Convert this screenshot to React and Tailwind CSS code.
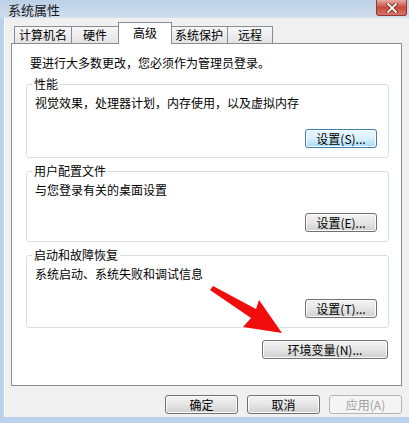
import React from "react";

const font = { fontFamily: '"Noto Sans CJK SC", "Noto Sans", sans-serif' };

function Btn({ children, className = "", disabled = false, focus = false }) {
  const base = "h-[19px] flex items-center justify-center rounded-[3px] text-[12px] leading-none border";
  let look;
  if (disabled) {
    look = "border-[#b5b5b5] bg-[#f4f4f4] text-[#a0a0a0]";
  } else if (focus) {
    look = "border-[#3c7fb1] bg-gradient-to-b from-[#eaf6fd] via-[#d9f0fc] to-[#a7d9f5] text-black shadow-[inset_0_0_0_1px_#ffffff]";
  } else {
    look = "border-[#707070] bg-gradient-to-b from-[#f2f2f2] via-[#e6e6e6] to-[#cfcfcf] text-black shadow-[inset_0_0_0_1px_#fbfbfb]";
  }
  return <div className={`${base} ${look} ${className}`}>{children}</div>;
}

function Group({ label, text, btn, h, focus }) {
  return (
    <div className={`relative ${h} w-[363px] border border-[#d5dfe5] rounded-[3px] flex flex-col`}>
      <span className="absolute left-[5px] top-[-9px] bg-white px-[2px] text-[12px] leading-[16px] text-black">
        {label}
      </span>
      <div className="pl-[8px] pt-[10px] text-[12px] leading-[16px] text-black">{text}</div>
      <div className="mt-auto mb-[9px] mr-[11px] self-end">
        <Btn className="w-[72px]" focus={focus}>{btn}</Btn>
      </div>
    </div>
  );
}

function Tab({ children, w, selected }) {
  if (selected) {
    return (
      <div
        className={`${w} h-[22px] -mb-[1px] -mx-[1px] relative z-10 bg-white border border-b-0 border-[#898c95] flex items-start justify-center pt-[2px] text-[12px] leading-[16px] text-black`}
      >
        {children}
      </div>
    );
  }
  return (
    <div
      className={`${w} h-[17px] bg-gradient-to-b from-[#f7f7f7] to-[#e3e3e3] border border-b-0 border-[#898c95] flex items-center justify-center text-[12px] leading-[16px] text-black -ml-[1px]`}
    >
      {children}
    </div>
  );
}

export default function App() {
  return (
    <div className="relative w-[409px] h-[423px] overflow-hidden bg-[#b9d1ea] flex flex-col" style={font}>
      {/* title bar */}
      <div className="h-[18px] flex items-start justify-between bg-gradient-to-b from-[#bcd0e6] to-[#d2dfee] pl-[8px] pr-[2px]">
        <span className="text-[13px] leading-[17px] text-[#1a1a1a] mt-[1px]">系统属性</span>
        <div className="w-[31px] h-[16px] rounded-b-[3px] border border-t-0 border-[#8a3b3b] bg-gradient-to-b from-[#e7a9a0] via-[#c8493c] to-[#d9746a] flex items-center justify-center">
          <svg width="12" height="10" viewBox="0 0 12 10">
            <path d="M2 1 L10 9 M10 1 L2 9" stroke="#5a1a1a" strokeWidth="3.2" strokeLinecap="square" />
            <path d="M2 1 L10 9 M10 1 L2 9" stroke="#ffffff" strokeWidth="1.8" strokeLinecap="square" />
          </svg>
        </div>
      </div>

      {/* body */}
      <div className="flex-1 ml-[4px] mb-[6px] border-l border-white bg-[#f0f0f0] flex flex-col pl-[6px] pr-[6px]">
        {/* tabs */}
        <div className="h-[25px] flex items-end pl-[4px]">
          <Tab w="w-[58px]">计算机名</Tab>
          <Tab w="w-[48px]">硬件</Tab>
          <Tab w="w-[54px]" selected>高级</Tab>
          <Tab w="w-[58px]">系统保护</Tab>
          <Tab w="w-[46px]">远程</Tab>
        </div>

        {/* panel */}
        <div className="w-[391px] h-[343px] bg-white border border-[#898c95] flex flex-col">
          <div className="pl-[18px] pt-[11px] text-[12px] leading-[16px] text-black">
            要进行大多数更改，您必须作为管理员登录。
          </div>
          <div className="pl-[14px] pt-[13px] flex flex-col gap-[13px]">
            <Group label="性能" text="视觉效果，处理器计划，内存使用，以及虚拟内存" btn="设置(S)..." h="h-[74px]" focus />
            <Group label="用户配置文件" text="与您登录有关的桌面设置" btn="设置(E)..." h="h-[71px]" />
            <Group label="启动和故障恢复" text="系统启动、系统失败和调试信息" btn="设置(T)..." h="h-[73px]" />
          </div>
          <div className="flex justify-end pr-[13px] pt-[12px]">
            <Btn className="w-[126px]">环境变量(N)...</Btn>
          </div>
        </div>

        {/* bottom buttons */}
        <div className="flex justify-end gap-[9px] pt-[9px] pr-[1px]">
          <Btn className="w-[73px]">确定</Btn>
          <Btn className="w-[73px]">取消</Btn>
          <Btn className="w-[73px]" disabled>应用(A)</Btn>
        </div>
      </div>

      {/* red annotation arrow */}
      <svg className="absolute left-0 top-0 pointer-events-none" width="409" height="423" viewBox="0 0 409 423">
        <polygon
          points="210,290 213,286 256,309 259,300 282,333 243,327 251,318"
          fill="#f20d0d"
        />
      </svg>
    </div>
  );
}
